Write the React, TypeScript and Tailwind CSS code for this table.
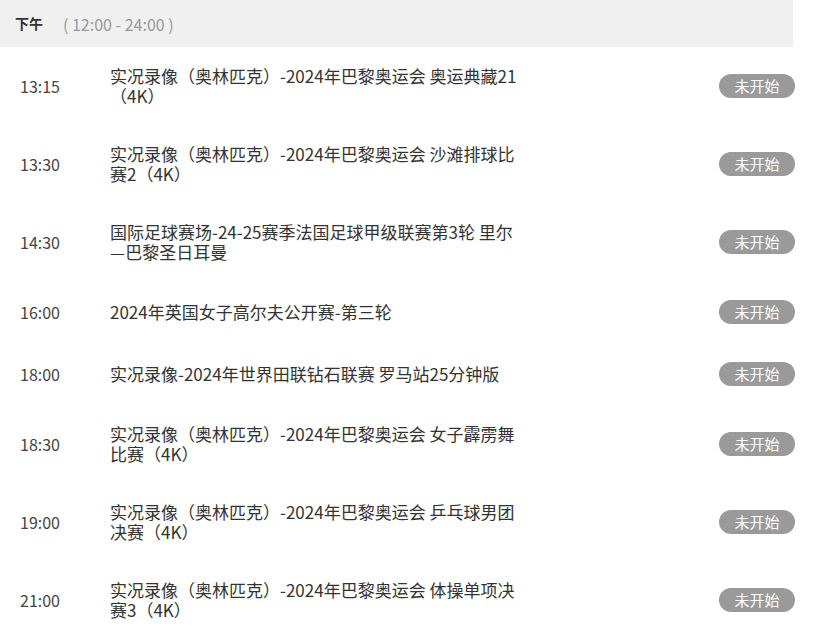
const ROWS = [
  { time: "13:15", title: "实况录像（奥林匹克）-2024年巴黎奥运会 奥运典藏21（4K）" },
  { time: "13:30", title: "实况录像（奥林匹克）-2024年巴黎奥运会 沙滩排球比赛2（4K）" },
  { time: "14:30", title: "国际足球赛场-24-25赛季法国足球甲级联赛第3轮 里尔—巴黎圣日耳曼" },
  { time: "16:00", title: "2024年英国女子高尔夫公开赛-第三轮" },
  { time: "18:00", title: "实况录像-2024年世界田联钻石联赛 罗马站25分钟版" },
  { time: "18:30", title: "实况录像（奥林匹克）-2024年巴黎奥运会 女子霹雳舞比赛（4K）" },
  { time: "19:00", title: "实况录像（奥林匹克）-2024年巴黎奥运会 乒乓球男团决赛（4K）" },
  { time: "21:00", title: "实况录像（奥林匹克）-2024年巴黎奥运会 体操单项决赛3（4K）" },
];

export default function App() {
  return (
    <main
      className="min-h-screen w-[815px] bg-white pr-[20px] text-[#333]"
      style={{ fontFamily: '"Microsoft YaHei", "Noto Sans CJK SC", "Noto Sans", sans-serif' }}
    >
      {/* period header */}
      <div className="mr-[2px] flex h-[47px] items-center bg-[#f0f0f0] pl-[15px]">
        <span className="text-[14px] font-bold text-[#333]">下午</span>
        <span className="ml-[20px] text-[16px] text-[#999]">( 12:00 - 24:00 )</span>
      </div>

      {/* schedule rows */}
      <ul>
        {ROWS.map((r) => (
          <li key={r.time} className="flex min-h-[62px] items-center py-[19px]">
            <span className="w-[110px] shrink-0 pl-[20px] text-[16px] text-[#444]">{r.time}</span>
            <p className="w-[410px] text-[17px] leading-[20px] text-[#333]">{r.title}</p>
            <span className="ml-auto flex h-[24px] w-[76px] items-center justify-center rounded-full bg-[#9a9a9a] text-[15px] text-white">
              未开始
            </span>
          </li>
        ))}
      </ul>
    </main>
  );
}
